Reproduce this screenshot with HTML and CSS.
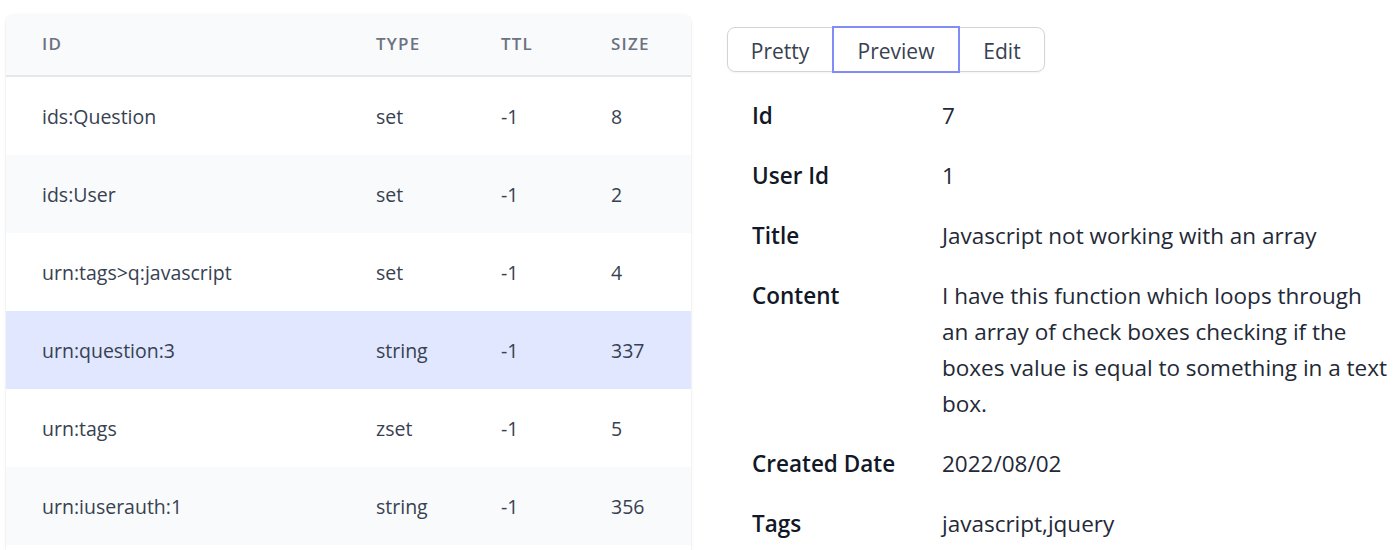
FILE: index.html
```html
<!DOCTYPE html>
<html lang="en">
<head>
<meta charset="utf-8">
<title>Keys</title>
<link rel="stylesheet" href="styles.css">
</head>
<body>
<div class="page">
  <div class="card">
    <div class="row head">
      <div>ID</div><div>Type</div><div>TTL</div><div>Size</div>
    </div>
    <div class="row"><div>ids:Question</div><div>set</div><div>-1</div><div>8</div></div>
    <div class="row alt"><div>ids:User</div><div>set</div><div>-1</div><div>2</div></div>
    <div class="row"><div>urn:tags&gt;q:javascript</div><div>set</div><div>-1</div><div>4</div></div>
    <div class="row sel"><div>urn:question:3</div><div>string</div><div>-1</div><div>337</div></div>
    <div class="row"><div>urn:tags</div><div>zset</div><div>-1</div><div>5</div></div>
    <div class="row alt"><div>urn:iuserauth:1</div><div>string</div><div>-1</div><div>356</div></div>
  </div>
  <div class="panel">
    <div class="tabs">
      <button class="tab t-pretty">Pretty</button>
      <button class="tab t-preview active">Preview</button>
      <button class="tab t-edit">Edit</button>
    </div>
    <dl class="details">
      <div class="item"><dt>Id</dt><dd>7</dd></div>
      <div class="item"><dt>User Id</dt><dd>1</dd></div>
      <div class="item"><dt>Title</dt><dd>Javascript not working with an array</dd></div>
      <div class="item"><dt>Content</dt><dd class="lines">I have this function which loops through<br>an array of check boxes checking if the<br>boxes value is equal to something in a text<br>box.</dd></div>
      <div class="item"><dt>Created Date</dt><dd>2022/08/02</dd></div>
      <div class="item"><dt>Tags</dt><dd>javascript,jquery</dd></div>
    </dl>
  </div>
</div>
</body>
</html>
```
FILE: styles.css
```css
* { box-sizing: border-box; }
html, body { margin: 0; padding: 0; background: #fff; }
body {
  font-family: "Open Sans", "Noto Sans", "Liberation Sans", sans-serif;
  color: #111827;
  width: 1396px;
  height: 550px;
  overflow: hidden;
}
.page {
  display: flex;
  align-items: flex-start;
}
.card {
  margin: 14px 0 0 6px;
  width: 685px;
  height: 536px;
  border-radius: 8px 8px 0 0;
  overflow: hidden;
  box-shadow: 0 1px 3px rgba(0,0,0,0.10), 0 1px 2px rgba(0,0,0,0.06);
  background: #fff;
}
.row {
  display: grid;
  grid-template-columns: 334px 125px 110px 1fr;
  padding-left: 36px;
  height: 78px;
  align-items: center;
  font-size: 19.5px;
  color: #374151;
}
.row.head {
  height: 63px;
  background: #f9fafb;
  border-bottom: 2px solid #e5e7eb;
  font-size: 17px;
  font-weight: 600;
  text-transform: uppercase;
  letter-spacing: 0.07em;
  color: #6b7280;
  padding-bottom: 2px;
}
.row.alt { background: #f9fafb; }
.row.sel { background: #e0e7ff; }
.panel {
  margin: 27px 0 0 36px;
  flex: 1;
}
.tabs {
  display: inline-flex;
  border: 1px solid #d1d5db;
  border-radius: 8px;
  height: 45px;
  box-shadow: 0 1px 2px rgba(0,0,0,0.05);
}
.tab {
  font-family: inherit;
  font-size: 21px;
  font-weight: 500;
  color: #374151;
  background: transparent;
  border: 0;
  padding: 2px 0 0;
  margin: 0;
  height: 43px;
}
.t-pretty { width: 104px; }
.t-preview {
  width: 128px;
  height: 47px;
  margin-top: -2px;
  border: 2px solid #818cf8;
}
.t-edit { width: 84px; }
.details {
  margin: 14px 0 0 0;
  padding: 0;
}
.item {
  display: flex;
  padding: 12px 0;
  font-size: 22.5px;
  line-height: 36px;
}
.item dt {
  width: 215px;
  padding-left: 25px;
  font-weight: 600;
  color: #111827;
  flex: none;
}
.item dd {
  margin: 0;
  flex: 1;
  color: #1f2937;
}
.item dd.lines { white-space: nowrap; }
```
